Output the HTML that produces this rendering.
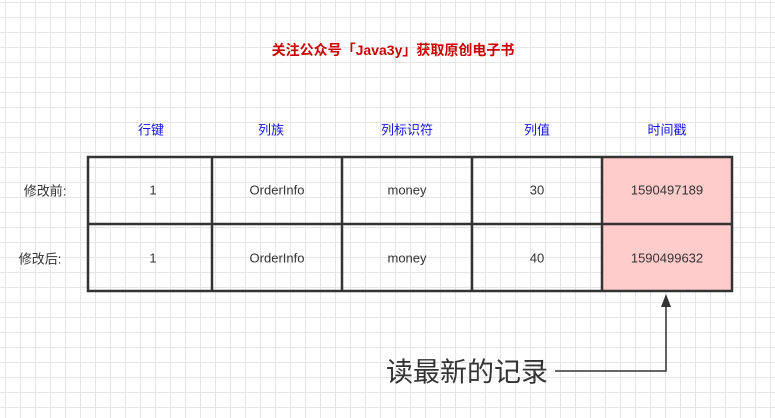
<!DOCTYPE html>
<html><head><meta charset="utf-8"><style>
body{margin:0;width:775px;height:418px;overflow:hidden;background:#fff;
background-image:linear-gradient(#e6e6e6 1px,transparent 1px),linear-gradient(90deg,#e6e6e6 1px,transparent 1px);
background-size:15px 15px;background-position:5px 2px;
font-family:"Liberation Sans","Noto Sans CJK SC",sans-serif;position:relative}
.t{position:absolute;white-space:nowrap;transform:translate(-50%,-50%)}
.h{color:#1515e0;font-size:13px}
.c{color:#333;font-size:13px}
</style></head><body>
<div class="t" style="left:393px;top:50px;color:#c00;font-weight:bold;font-size:14px">关注公众号「Java3y」获取原创电子书</div>
<div class="t h" style="left:151px;top:129px">行键</div>
<div class="t h" style="left:271px;top:129px">列族</div>
<div class="t h" style="left:407px;top:129px">列标识符</div>
<div class="t h" style="left:537px;top:129px">列值</div>
<div class="t h" style="left:667px;top:129px">时间戳</div>
<svg width="775" height="418" style="position:absolute;left:0;top:0">
<rect x="603" y="157" width="129" height="134" fill="#ffcccc"/>
<g stroke="#333" stroke-width="2.5" fill="none">
<rect x="88" y="157" width="644" height="134"/>
<line x1="88" y1="224" x2="732" y2="224"/>
<line x1="212" y1="157" x2="212" y2="291"/>
<line x1="342" y1="157" x2="342" y2="291"/>
<line x1="472" y1="157" x2="472" y2="291"/>
<line x1="602" y1="157" x2="602" y2="291"/>
</g>
<polyline points="555,371 666,371 666,305" stroke="#333" stroke-width="1.5" fill="none"/>
<polygon points="666,294 661,307 671,307" fill="#333"/>
</svg>
<div class="t c" style="left:45px;top:190px">修改前:</div>
<div class="t c" style="left:40px;top:258px">修改后:</div>
<div class="t c" style="left:153px;top:190px">1</div>
<div class="t c" style="left:277px;top:190px">OrderInfo</div>
<div class="t c" style="left:407px;top:190px">money</div>
<div class="t c" style="left:537px;top:190px">30</div>
<div class="t c" style="left:667px;top:190px">1590497189</div>
<div class="t c" style="left:153px;top:258px">1</div>
<div class="t c" style="left:277px;top:258px">OrderInfo</div>
<div class="t c" style="left:407px;top:258px">money</div>
<div class="t c" style="left:537px;top:258px">40</div>
<div class="t c" style="left:667px;top:258px">1590499632</div>
<div class="t" style="left:467px;top:370px;font-size:27px;color:#333">读最新的记录</div>
</body></html>
